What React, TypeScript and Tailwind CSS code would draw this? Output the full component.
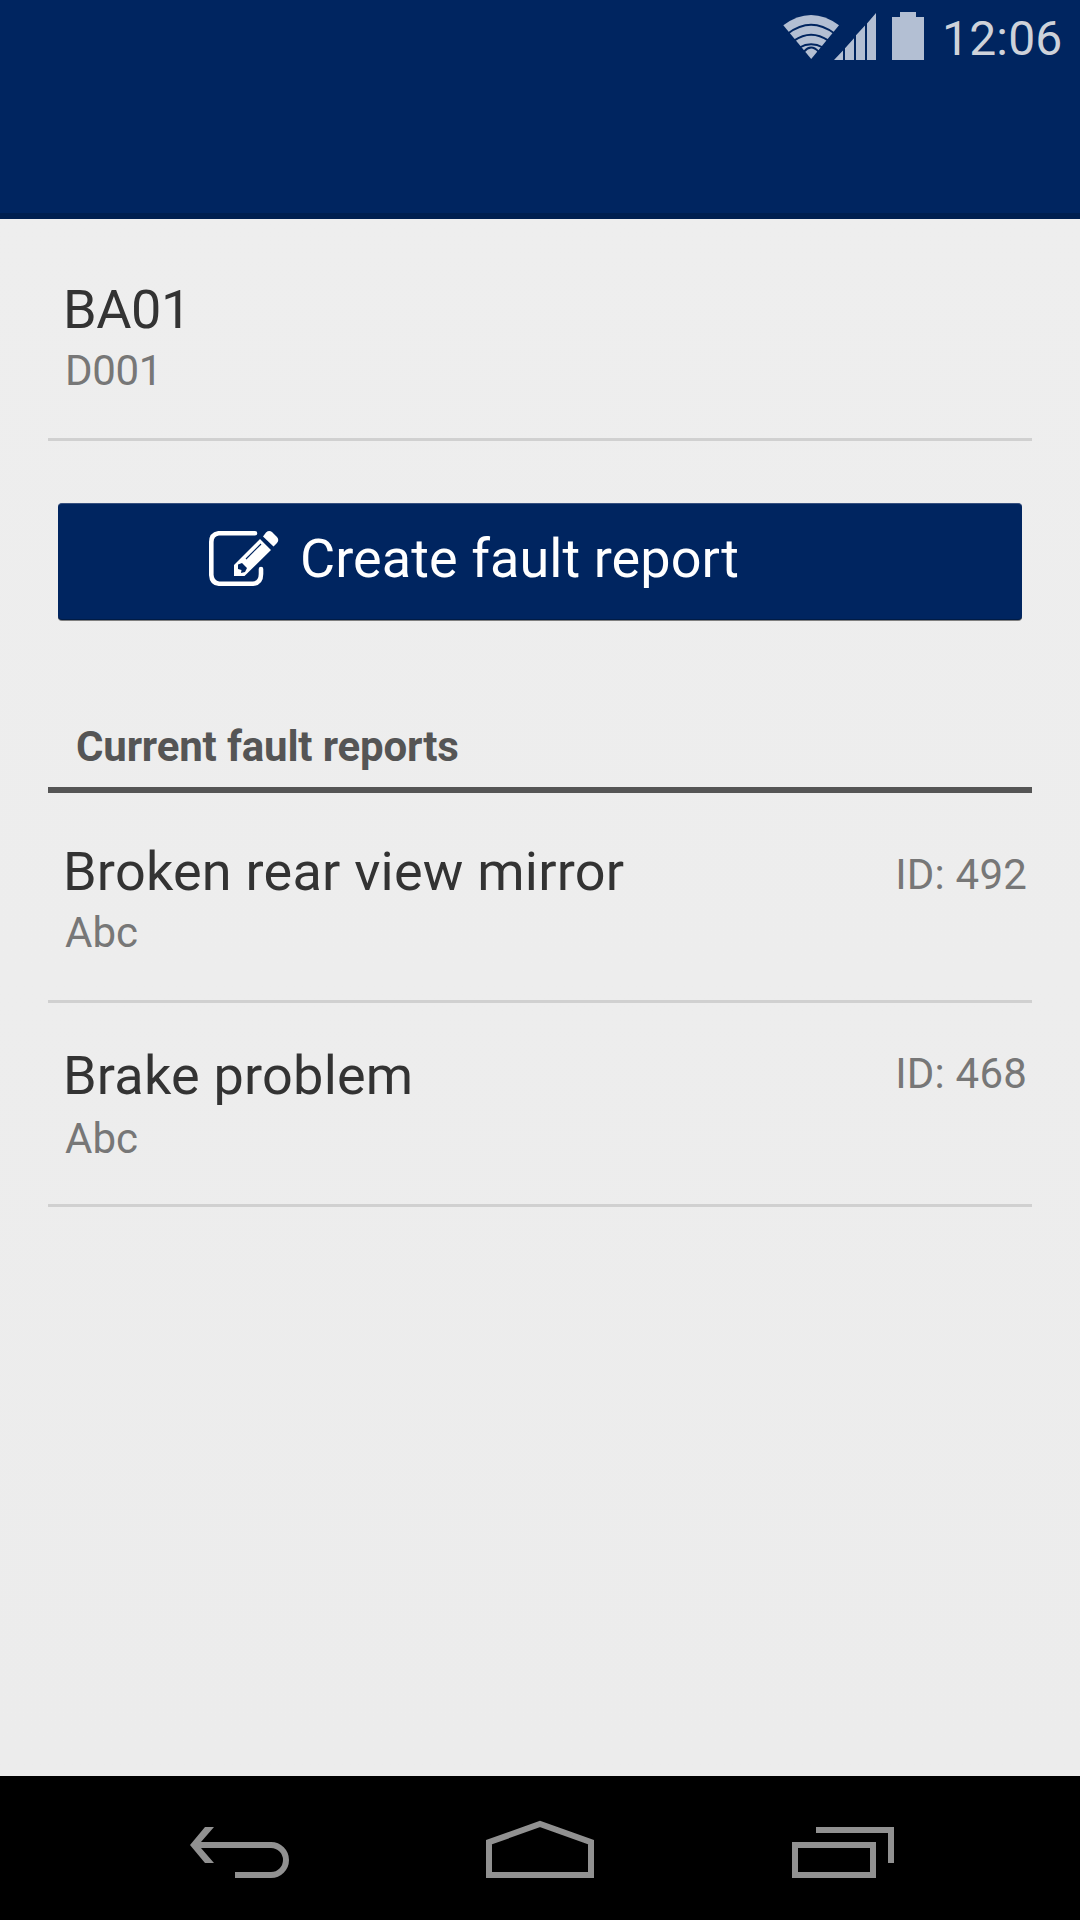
import React from "react";

function StatusBar() {
  return (
    <div className="flex h-[75px] items-start justify-end">
      <svg className="h-[75px] w-[172px] shrink-0" viewBox="770 0 172 75" fill="#b3bfd3">
        <path d="M783.3 25.2 Q811 4.8 839 25.2 L811.2 59 Z" />
        <g fill="none" stroke="#002560" strokeWidth="2">
          <path d="M788 33.5 Q811 16 834.5 33.5" />
          <path d="M794 40.6 Q811 28.8 828.5 40.6" />
          <path d="M799.5 47.5 Q811 40.8 823 47.5" />
          <path d="M804 51.6 Q811 43.6 818.5 51.6" />
        </g>
        <path d="M834 60 L843 50.5 V60Z M845 48.3 L854 38.3 V60 H845Z M856 35.3 L865 25.5 V60 H856Z M867 23.5 L876 13 V60 H867Z" />
        <path d="M900 12h16v5h8v43h-32V17h8z" />
      </svg>
      <div className="w-[138px] pt-[11px] text-[48px] leading-[56px] tracking-[0.2px] text-[#ced2da]">12:06</div>
    </div>
  );
}

function EditIcon() {
  return (
    <svg className="h-[58px] w-[72px] shrink-0" viewBox="208 530 72 58">
      <path d="M255 533.3 H218.5 Q211.3 534.5 211.3 542 V575 Q211.8 583 219 583.8 H253 Q261 583 261 574 V569" fill="none" stroke="#fff" strokeWidth="4.6" strokeLinecap="round" />
      <path d="M260 539 L271 550 L244.5 576 H234 V565Z M263 536.5 L266 532.5 Q269 530 272 532 L277 537 Q279.500 540 277 543 L273.500 546.500Z" fill="#fff" />
      <path d="M246 559 L261 544" stroke="#002560" strokeWidth="1.2" />
      <path d="M238 564.5 L242 563 L247 568 L245 572 L241 573 L241.500 570 L238 569Z" fill="#002560" />
    </svg>
  );
}

const reports = [
  { title: "Broken rear view mirror", note: "Abc", id: "492", row: "h-[210px] pt-[47px]", gap: "mt-1", idTop: "pt-[10px]" },
  { title: "Brake problem", note: "Abc", id: "468", row: "h-[204px] pt-[41px]", gap: "mt-[6px]", idTop: "pt-[5px]" },
];

export default function App() {
  return (
    <div className="flex h-[1920px] w-[1080px] flex-col overflow-hidden bg-[#ececec] font-['Roboto',sans-serif]">
      <header className="h-[219px] shrink-0 border-b-[6px] border-[#001f4f] bg-[#002560]">
        <StatusBar />
      </header>
      <main className="flex-1 bg-linear-to-b from-[#eeeeee] to-[#ececec] px-12">
        <section className="h-[222px] border-b-[3px] border-[#d0d0d0] pt-[59px] pl-[15px]">
          <h1 className="text-[54px] leading-[64px] tracking-[-0.4px] text-[#333]">BA01</h1>
          <p className="mt-1 pl-[2px] text-[42px] leading-[50px] tracking-[-0.3px] text-[#777]">D001</p>
        </section>
        <button className="mx-[10px] mt-[62px] flex h-[117px] w-[964px] items-start rounded-[4px] border-t border-b border-t-[#36507f] border-b-[#001b45] bg-[#002560] pt-[23px] pl-[150px] text-[54px] leading-[64px] tracking-[0.07px] text-white shadow-[0_1px_0_#808080]">
          <span className="pt-[3px]"><EditIcon /></span>
          <span className="pl-[20px]">Create fault report</span>
        </button>
        <h2 className="mt-[102px] h-[71px] border-b-[6px] border-[#555] pl-7 text-[42px] leading-[50px] font-bold tracking-[-0.17px] text-[#555]">
          Current fault reports
        </h2>
        {reports.map((r) => (
          <article key={r.id} className={"flex justify-between border-b-[3px] border-[#d0d0d0] pr-[5px] pl-[15px] " + r.row}>
            <div>
              <h3 className="text-[54px] leading-[64px] tracking-[0.23px] text-[#333]">{r.title}</h3>
              <p className={"pl-[2px] text-[42px] leading-[50px] text-[#777] " + r.gap}>{r.note}</p>
            </div>
            <p className={"text-[42px] leading-[50px] tracking-[0.2px] text-[#777] " + r.idTop}>ID: {r.id}</p>
          </article>
        ))}
      </main>
      <nav className="h-[144px] shrink-0 bg-black">
        <svg className="block h-[144px] w-[1080px]" viewBox="0 1776 1080 144" fill="none" stroke="#919191" strokeWidth="6">
          <path d="M196 1845 H271 A15 15 0 0 1 271 1875 H235" />
          <path d="M205 1827 H214 L201 1842 V1848 L214 1863 H205 L190 1845Z" fill="#919191" stroke="none" />
          <path d="M489 1875 V1842.200 L540 1824 L591 1842.200 V1875Z" />
          <path d="M795 1845 H873 V1875 H795Z M816 1830 H891 V1863" />
        </svg>
      </nav>
    </div>
  );
}
